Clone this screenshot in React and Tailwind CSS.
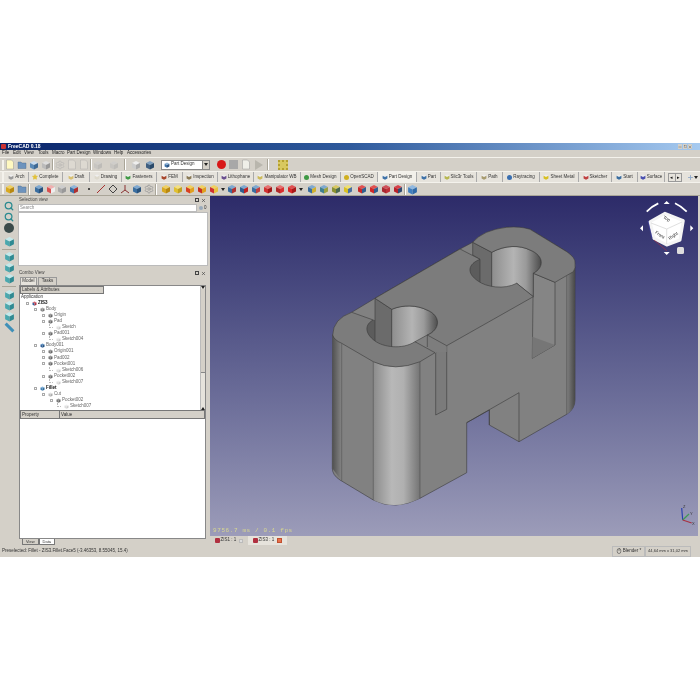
import React from "react";
import { Search, Settings, Plus, X, Minus, Square, Mouse, Star } from "lucide-react";

const font = "font-['Liberation_Sans',Arial,sans-serif]";

const Cube = ({ a = "#c33", b = "#911", c = "#e66", size = 10 }) => (
  <svg width={size} height={size} viewBox="0 0 10 10" className="shrink-0">
    <polygon points="5,1 9,3 5,5 1,3" fill={c} />
    <polygon points="1,3 5,5 5,9.5 1,7.5" fill={a} />
    <polygon points="9,3 5,5 5,9.5 9,7.5" fill={b} />
  </svg>
);

const Doc = ({ fill = "#fff8c0" }) => (
  <svg width="10" height="11" viewBox="0 0 10 11" className="shrink-0">
    <path d="M1.5 1h5l2 2v7h-7z" fill={fill} stroke="#999" strokeWidth=".5" />
  </svg>
);

const Folder = () => (
  <svg width="10" height="10" viewBox="0 0 10 10" className="shrink-0">
    <path d="M1 2h3l1 1h4v5.5H1z" fill="#6d93bd" stroke="#46688c" strokeWidth=".4" />
  </svg>
);

const Dot = ({ color = "#c33", size = 6 }) => (
  <span className="rounded-[1px] shrink-0" style={{ width: size, height: size, background: color }} />
);

const Arrow = () => (
  <svg width="4" height="3" viewBox="0 0 4 3" className="shrink-0">
    <path d="M0 0h4L2 3z" fill="#222" />
  </svg>
);

const Grip = () => <div className="w-[2px] h-[10px] mx-px border-x border-[#f4f2ec] bg-[#a9a598] shrink-0" />;

const Sep = () => <div className="w-[2px] h-[11px] mx-px border-r border-white bg-[#a9a598] shrink-0" />;

const workbenches = [
  { label: "Arch", w: "w-[24px]", color: "#9a9a9a" },
  { label: "Complete", w: "w-[34px]", color: "#e2c23a", star: true },
  { label: "Draft", w: "w-[27px]", color: "#d8c070" },
  { label: "Drawing", w: "w-[32px]", color: "#ddd9cc" },
  { label: "Fasteners", w: "w-[35px]", color: "#3f9a45" },
  { label: "FEM", w: "w-[26px]", color: "#a8472c" },
  { label: "Inspection", w: "w-[35px]", color: "#8a7a55" },
  { label: "Lithophane", w: "w-[36px]", color: "#6a4f90" },
  { label: "Manipulator WB", w: "w-[47px]", color: "#cdbb5a" },
  { label: "Mesh Design", w: "w-[40px]", color: "#3f9a45", round: true },
  { label: "OpenSCAD", w: "w-[37px]", color: "#d0b020", round: true },
  { label: "Part Design", w: "w-[39px]", color: "#3e72a8", active: true },
  { label: "Part", w: "w-[24px]", color: "#3e72a8" },
  { label: "Slic3r Tools", w: "w-[36px]", color: "#b8b850" },
  { label: "Path", w: "w-[26px]", color: "#a89c70" },
  { label: "Raytracing", w: "w-[37px]", color: "#3a6fb0", round: true },
  { label: "Sheet Metal", w: "w-[39px]", color: "#d8c020" },
  { label: "Sketcher", w: "w-[33px]", color: "#c04040" },
  { label: "Start", w: "w-[26px]", color: "#3a6ea0" },
  { label: "Surface", w: "w-[27px]", color: "#4a50b0" },
];

const menus = [
  ["File", "w-[11px]"],
  ["Edit", "w-[11px]"],
  ["View", "w-[14px]"],
  ["Tools", "w-[14px]"],
  ["Macro", "w-[15px]"],
  ["Part Design", "w-[26px]"],
  ["Windows", "w-[21px]"],
  ["Help", "w-[13px]"],
  ["Accessories", "w-[30px]"],
];

const tree = [
  { t: "ZIS3", x: "pl-[12px]", bold: true, cube: ["#2e5f9a", "#b03040", "#d06070"] },
  { t: "Body", x: "pl-[20px]", cube: ["#888", "#777", "#aaa"] },
  { t: "Origin", x: "pl-[28px]", cube: ["#777", "#666", "#999"] },
  { t: "Pad", x: "pl-[28px]", cube: ["#777", "#666", "#999"] },
  { t: "Sketch", x: "pl-[36px]", leaf: true, cube: ["#ddd", "#ccc", "#eee"] },
  { t: "Pad001", x: "pl-[28px]", cube: ["#777", "#666", "#999"] },
  { t: "Sketch004", x: "pl-[36px]", leaf: true, cube: ["#ddd", "#ccc", "#eee"] },
  { t: "Body001", x: "pl-[20px]", cube: ["#2e5f9a", "#24507f", "#5f8fc0"] },
  { t: "Origin001", x: "pl-[28px]", cube: ["#777", "#666", "#999"] },
  { t: "Pad002", x: "pl-[28px]", cube: ["#777", "#666", "#999"] },
  { t: "Pocket001", x: "pl-[28px]", cube: ["#777", "#666", "#999"] },
  { t: "Sketch006", x: "pl-[36px]", leaf: true, cube: ["#ddd", "#ccc", "#eee"] },
  { t: "Pocket002", x: "pl-[28px]", cube: ["#777", "#666", "#999"] },
  { t: "Sketch007", x: "pl-[36px]", leaf: true, cube: ["#ddd", "#ccc", "#eee"] },
  { t: "Fillet", x: "pl-[20px]", bold: true, cube: ["#3f7fb5", "#2e6a9a", "#7fb0d8"] },
  { t: "Cut", x: "pl-[28px]", cube: ["#bbb", "#aaa", "#ddd"] },
  { t: "Pocket002", x: "pl-[36px]", cube: ["#777", "#666", "#999"] },
  { t: "Sketch007", x: "pl-[44px]", leaf: true, cube: ["#ddd", "#ccc", "#eee"] },
];

const PanelTitle = ({ title }) => (
  <div className="flex items-center h-[6px] px-px text-[4.5px] text-[#444]">
    <span className="flex-1">{title}</span>
    <span className="w-[4px] h-[4px] border border-[#444] mr-[2px]" />
    <X size={5} strokeWidth={3} className="mr-px" />
  </div>
);

const Model = () => (
  <svg viewBox="210 196 488 340" className="w-full h-full block">
    <defs>
      <linearGradient id="lobe" gradientUnits="userSpaceOnUse" x1="373" x2="420" y1="0" y2="0">
        <stop offset="0" stopColor="#8a8a8a" />
        <stop offset=".4" stopColor="#b8b8b8" />
        <stop offset=".65" stopColor="#b0b0b0" />
        <stop offset="1" stopColor="#747474" />
      </linearGradient>
      <linearGradient id="edgeL" gradientUnits="userSpaceOnUse" x1="332" x2="342" y1="0" y2="0">
        <stop offset="0" stopColor="#4e4e4e" />
        <stop offset="1" stopColor="#868686" />
      </linearGradient>
      <linearGradient id="edgeR" gradientUnits="userSpaceOnUse" x1="566" x2="575" y1="0" y2="0">
        <stop offset="0" stopColor="#858585" />
        <stop offset="1" stopColor="#484848" />
      </linearGradient>
      <linearGradient id="hole1" gradientUnits="userSpaceOnUse" x1="391" x2="438" y1="0" y2="0">
        <stop offset="0" stopColor="#8c8c8c" />
        <stop offset=".45" stopColor="#b4b4b4" />
        <stop offset=".7" stopColor="#9a9a9a" />
        <stop offset="1" stopColor="#4c4c4c" />
      </linearGradient>
      <linearGradient id="hole2" gradientUnits="userSpaceOnUse" x1="491" x2="541" y1="0" y2="0">
        <stop offset="0" stopColor="#8c8c8c" />
        <stop offset=".45" stopColor="#b4b4b4" />
        <stop offset=".7" stopColor="#9a9a9a" />
        <stop offset="1" stopColor="#4c4c4c" />
      </linearGradient>
    </defs>

    <g stroke="#3a3a3a" strokeWidth=".6" strokeLinejoin="round">
      {/* body outline */}
      <path
        fill="#818181"
        d="M332.7 335L351.7 312.3L375 298.3L460 249L472.7 242.3L506.7 227.3L530 229.3L566.7 251.7Q575 257 575 270L575 400Q575 409 566.7 414.3L519 441.7L489.3 425L489.3 410L466.7 422.7L466.7 472.7L420 498.3Q395 511 373.3 500L340 480Q332.3 475 332.3 468.3Z"
      />

      {/* lobe sides */}
      <path stroke="none" fill="url(#edgeL)" d="M332.5 335L341.7 343.3L341.7 481L332.3 468.3Z" />
      <path stroke="none" fill="url(#lobe)" d="M373.3 361.7Q395 372 420 361.7L420 498.3Q395 511 373.3 500Z" />
      <path stroke="none" fill="url(#edgeR)" d="M566.7 251.7Q575 257 575 270L575 400Q575 409 566.7 414.3Z" />
      <path fill="none" strokeWidth=".4" d="M341.7 343.3V481M373.3 361.7V500M420 361.7V498.3M566.7 276V414.3" />

      {/* slots */}
      <path fill="#858585" d="M533.3 273.3L555 282.3L555 345L532.3 358.3Z" />
      <path fill="#767676" stroke="none" d="M532.3 336.7L555 345L532.3 358.3Z" />
      <path fill="#7b7b7b" d="M435.7 352.7L446.7 345.7L446.7 409.3L435.7 415Z" />
      <path fill="#7d7d7d" stroke="none" d="M427.3 335L446.7 345.7L446.7 352L435 352.7L427.3 348Z" />
      <path fill="none" d="M427.3 335V347" />

      {/* holes, the parts below the rim are hidden by the top faces */}
      <path fill="#5c5c5c" stroke="none" d="M373.3 320L375 320L375 348L360 348L360 322Z" />
      <path fill="#6b6b6b" d="M375 298.3L391.7 309.3L391.7 352L375 352Z" />
      <path fill="url(#hole1)" d="M391.7 309.3C403 304.5 417 305 427 310C442 316 440 330 427.3 335L415 341.7L415 352L391.7 352Z" />
      <path fill="#5c5c5c" stroke="none" d="M480 259.3L480 290L462 290L462 262Z" />
      <path fill="#6b6b6b" d="M472.7 242.3L491.7 252.3L491.7 292L480 292L480 259.3L472.7 255Z" />
      <path fill="url(#hole2)" d="M491.7 252.3C505 245 520 245 530 250C545 256 544 268 533.3 273.3L533.3 296.7L516.7 283.3L516.7 292L491.7 292Z" />

      {/* top faces */}
      <path
        fill="#7c7c7c"
        d="M332.7 335Q333 319 351.7 312.3L373.3 320C365 324 364 333 375 341C383 347 402 350 415 341.7L435 352.7L420 361.7Q395 372 373.3 361.7L341.7 343.3Q334 340 332.7 335Z"
      />
      <path
        fill="#7c7c7c"
        d="M375 298.3L460 249L480 259.3C468 264 466 273 478 281C486 287 504 290 516.7 283.3L533.3 296.7L446.7 345.7L427.3 335C440 330 442 316 427 310C417 305 403 304.5 391.7 309.3Z"
      />
      <path
        fill="#7c7c7c"
        d="M472.7 242.3Q483 230 506.7 227.3Q520 226 530 229.3L566.7 251.7Q576 258 575 263.3Q576 268 573.3 271.7L555 282.3L533.3 273.3C544 268 545 256 530 250C520 245 505 245 491.7 252.3Z"
      />

      {/* notch */}
      <path fill="none" d="M466.7 422.7L519 392.7V441.7M489.3 410V425" />
    </g>

    {/* navigation cube */}
    <g fill="#fff">
      <path d="M666.7 201l-3 3h6zM640 228.3l3-3v6zM693.3 228.3l-3-3v6zM666.7 255l-3-3h6z" />
      <path d="M646.7 211.7Q652 206 658.3 203.3M675 203.3Q681 206 686.7 211.7" fill="none" stroke="#fff" strokeWidth="1.8" />
      <path d="M665 213.3L683.3 220.7L680 240L666.7 245L654 238.3L650 221.7Z" stroke="#f4f4f4" strokeLinejoin="round" strokeWidth="3" />
      <path d="M651 223L666.7 229L682 222M666.7 229L666.7 244" fill="none" stroke="#d8d8d8" strokeWidth=".8" />
      <path d="M648 221L652 238" fill="none" stroke="#4040b0" strokeWidth=".5" />
      <path d="M654 240L667 251" fill="none" stroke="#b03040" strokeWidth=".6" />
      <rect x="677" y="247" width="7" height="7" rx="1.5" fill="#ddd" />
      <text x="666" y="220" fontSize="4.5" fill="#333" fontFamily="Liberation Sans" transform="rotate(30 666 220)" textAnchor="middle">Top</text>
      <text x="659" y="236" fontSize="4.5" fill="#333" fontFamily="Liberation Sans" transform="rotate(35 659 236)" textAnchor="middle">Front</text>
      <text x="674" y="237" fontSize="4.5" fill="#333" fontFamily="Liberation Sans" transform="rotate(-35 674 237)" textAnchor="middle">Right</text>
    </g>

    {/* axis triad */}
    <g strokeWidth="1.2" fill="none">
      <path d="M682.7 520L681.7 508" stroke="#2a3fb0" />
      <path d="M682.7 520L689 514" stroke="#3f9a55" />
      <path d="M682.7 520L691.7 523" stroke="#a83040" />
    </g>
    <g fontSize="4" fill="#333" fontFamily="Liberation Sans">
      <text x="683" y="508">Z</text>
      <text x="690" y="515">Y</text>
      <text x="692" y="525">X</text>
    </g>
  </svg>
);

const teal = { a: "#4aa8ae", b: "#2f8a92", c: "#c4e8ea", size: 11 };

export default function App() {
  return (
    <div className={`w-[700px] h-[700px] bg-white pt-[143px] overflow-hidden ${font}`}>
      <div className="h-[414px] flex flex-col bg-[#d4d0c8] text-[#333] blur-[0.3px]">
        {/* title bar */}
        <div className="h-[7px] flex items-center px-px bg-linear-to-r from-[#0a246a] via-[#2f5a9c] to-[#a6caf0] shrink-0">
          <Dot color="#c33" size={5} />
          <span className="ml-[2px] text-[5px] font-bold text-white">FreeCAD 0.18</span>
          <div className="ml-auto mr-[7px] flex gap-px">
            <span className="w-[4px] h-[5px] bg-[#d4d0c8] flex items-center justify-center"><Minus size={4} /></span>
            <span className="w-[4px] h-[5px] bg-[#d4d0c8] flex items-center justify-center"><Square size={3} /></span>
            <span className="w-[4px] h-[5px] bg-[#d4d0c8] flex items-center justify-center"><X size={4} /></span>
          </div>
        </div>

        {/* menu */}
        <div className="h-[7px] flex items-center pl-[2px] text-[4.5px] text-[#222] shrink-0">
          {menus.map(([m, w]) => (
            <span key={m} className={w}>{m}</span>
          ))}
        </div>

        {/* file toolbar */}
        <div className="h-[14px] flex items-center pl-px border-t border-[#f4f2ec] shrink-0">
          <Grip />
          <div className="flex items-center gap-[2px]">
            <Doc />
            <Folder />
            <Cube a="#5a8ab8" b="#3f6a95" c="#c8dcf0" />
            <Cube a="#bbb" b="#999" c="#ddd" />
          </div>
          <Sep />
          <div className="flex items-center gap-[2px] opacity-60">
            <Settings size={10} color="#aaa" />
            <Doc fill="#e4e0d8" />
            <Doc fill="#e4e0d8" />
          </div>
          <Sep />
          <div className="flex items-center gap-[6px] opacity-50">
            <Cube a="#bbb" b="#aaa" c="#ccc" size={10} />
            <Cube a="#bbb" b="#aaa" c="#ccc" size={10} />
          </div>
          <div className="ml-[4px]"><Sep /></div>
          <div className="ml-[4px] flex items-center gap-[4px]">
            <Cube a="#ccc" b="#aaa" c="#eee" />
            <Cube a="#3f5f80" b="#2a4a6a" c="#7fa0c0" />
          </div>
          <div className="ml-[6px] w-[49px] h-[10px] bg-white border border-[#888] flex items-center text-[4.5px] pl-[2px]">
            <Cube a="#3e72a8" b="#2b5585" c="#8fb5da" size={6} />
            <span className="ml-px flex-1">Part Design</span>
            <span className="w-[7px] h-full bg-[#d4d0c8] border-l border-[#888] flex items-center justify-center"><Arrow /></span>
          </div>
          <div className="ml-[7px] flex items-center gap-[3px]">
            <span className="w-[9px] h-[9px] rounded-full bg-[#d81818]" />
            <span className="w-[9px] h-[9px] bg-[#a8a8a8]" />
            <Doc fill="#efefe8" />
            <svg width="9" height="10" viewBox="0 0 9 10"><path d="M1 0l8 5-8 5z" fill="#b9b6ad" /></svg>
          </div>
          <div className="ml-[3px]"><Sep /></div>
          <div className="ml-[8px] w-[10px] h-[10px] border-2 border-dotted border-[#b5a030] bg-[#d8c860]" />
        </div>

        {/* workbench toolbar */}
        <div className="h-[12px] flex items-center pl-px border-y border-[#f4f2ec] bg-[#e6e3dc] shrink-0">
          <Grip />
          {workbenches.map((b) => (
            <div key={b.label} className={`${b.w} h-[10px] shrink-0 flex items-center justify-center gap-px border-r border-[#aaa] text-[4.5px] whitespace-nowrap ${b.active ? "bg-[#f2f0ea]" : ""}`}>
              {b.star ? (
                <Star size={6} fill={b.color} color={b.color} />
              ) : b.round ? (
                <span className="w-[5px] h-[5px] rounded-full shrink-0" style={{ background: b.color }} />
              ) : (
                <Cube a={b.color} b={b.color} c="#eee" size={6} />
              )}
              <span>{b.label}</span>
            </div>
          ))}
          <div className="ml-[3px] w-[14px] h-[9px] flex border border-[#999] text-[5px] leading-[7px] text-center text-[#111]">
            <span className="flex-1 border-r border-[#999]">◂</span>
            <span className="flex-1">▸</span>
          </div>
          <Plus size={7} strokeWidth={3} color="#8fa8c8" className="ml-[5px]" />
          <Arrow />
        </div>

        {/* part design toolbar */}
        <div className="h-[13px] flex items-center pl-px shrink-0 border-b border-[#a9a598]">
          <Grip />
          <div className="flex items-center gap-[2px]">
            <Cube a="#d8a820" b="#b88810" c="#f0d060" />
            <Folder />
          </div>
          <Sep />
          <div className="ml-[3px] flex items-center gap-[1.5px]">
            <Cube a="#3a6ea0" b="#28527c" c="#7ea8d0" />
            <Cube a="#d85050" b="#eee" c="#f0b0b0" />
            <Cube a="#aaa" b="#999" c="#ccc" />
            <Cube a="#3e72a8" b="#b03030" c="#8fb5da" />
          </div>
          <div className="ml-[9px] flex items-center gap-[2px]">
            <span className="w-[2px] h-[2px] rounded-full bg-[#222] mr-[4.5px]" />
            <svg width="10" height="10" viewBox="0 0 10 10"><path d="M1 9L9 1" stroke="#a83030" strokeWidth="1" /></svg>
            <svg width="10" height="10" viewBox="0 0 10 10"><path d="M5 1l4 4-4 4-4-4z" fill="none" stroke="#444" /></svg>
            <svg width="10" height="10" viewBox="0 0 10 10"><path d="M5 1v5L1 9M5 6l4 3" fill="none" stroke="#8a3030" /></svg>
            <Cube a="#3a6ea0" b="#28527c" c="#7ea8d0" />
            <Settings size={10} color="#999" />
          </div>
          <Sep />
          <div className="ml-[3px] flex items-center gap-[2px]">
            <Cube a="#d8a820" b="#b88810" c="#f0d060" />
            <Cube a="#e0c030" b="#c0a020" c="#f4e080" />
            <Cube a="#d84020" b="#e0a020" c="#f0d060" />
            <Cube a="#c83020" b="#e0a020" c="#f0d060" />
            <Cube a="#d03030" b="#e8c040" c="#f0d060" />
            <Arrow />
            <Cube a="#3a6ea0" b="#b03030" c="#7ea8d0" />
            <Cube a="#2f5f8f" b="#c02020" c="#7ea8d0" />
            <Cube a="#3a6ea0" b="#c04040" c="#7ea8d0" />
            <Cube a="#d03030" b="#a01818" c="#e87070" />
            <Cube a="#b02828" b="#d83030" c="#e87070" />
            <Cube a="#d82828" b="#a81818" c="#e05050" />
            <Arrow />
          </div>
          <div className="ml-[4px] flex items-center gap-[2px]">
            <Cube a="#3a6ea0" b="#d0b030" c="#7ea8d0" />
            <Cube a="#3f7f90" b="#9aa040" c="#7ea8d0" />
            <Cube a="#8a9030" b="#4a6a50" c="#d8c860" />
            <Cube a="#d8c020" b="#4a70a0" c="#f0e070" />
          </div>
          <div className="ml-[4px] flex items-center gap-[2px]">
            <Cube a="#c82828" b="#2f5f8f" c="#e05050" />
            <Cube a="#d02828" b="#30608f" c="#e05050" />
            <Cube a="#a82830" b="#c03038" c="#d05058" />
            <Cube a="#b82028" b="#304a70" c="#d84048" />
          </div>
          <Sep />
          <Cube a="#3f7fc0" b="#2f6aa8" c="#90b8e0" size={11} />
        </div>

        {/* main area */}
        <div className="flex-1 flex min-h-0">
          {/* view toolbar */}
          <div className="w-[18px] shrink-0 flex flex-col items-center pt-[5px] text-[#2a8a90]">
            <Search size={10} strokeWidth={3} className="mb-px" />
            <Search size={10} strokeWidth={3} className="mb-px" />
            <div className="w-[10px] h-[10px] rounded-full bg-[#3a4a4a] mb-[3px]" />
            <Cube {...teal} />
            <div className="w-[14px] h-px bg-[#a9a598] my-[1.5px]" />
            <Cube {...teal} />
            <Cube {...teal} />
            <Cube {...teal} />
            <div className="w-[14px] h-px bg-[#a9a598] my-[2px]" />
            <Cube {...teal} />
            <Cube {...teal} />
            <Cube {...teal} />
            <div className="w-[11px] h-[3px] bg-[#3f90b8] rotate-45 mt-[4px]" />
          </div>

          {/* docks */}
          <div className="w-[190px] shrink-0 flex flex-col pt-px">
            <PanelTitle title="Selection view" />
            <div className="flex items-center mt-px h-[8px]">
              <div className="w-[179px] h-full bg-white border border-[#bbb] text-[4.5px] leading-[6px] pl-px text-[#888]">Search</div>
              <span className="ml-[2px] w-[4px] h-[4px] rounded-full bg-[#9ab]" />
              <span className="ml-px text-[4.5px]">0</span>
            </div>
            <div className="h-[54px] bg-white border border-[#bbb] shrink-0" />
            <div className="mt-[4px]">
              <PanelTitle title="Combo View" />
            </div>
            <div className="flex mt-px pl-[2px] h-[8px] text-[4.5px] shrink-0">
              <span className="w-[17px] bg-[#e6e3dc] border border-b-0 border-[#999] text-center leading-[6px]">Model</span>
              <span className="w-[19px] ml-px border border-b-0 border-[#999] text-center leading-[6px]">Tasks</span>
            </div>

            <div className="flex-1 min-h-0 ml-px mr-[2px] border border-[#888] flex flex-col bg-white">
              <div className="flex h-[124px] shrink-0">
                <div className="flex-1 min-w-0 overflow-hidden">
                  <div className="w-[84px] h-[8px] bg-[#d4d0c8] border border-[#777] text-[4.5px] leading-[6px] pl-px">Labels &amp; Attributes</div>
                  <div className="text-[4.5px] leading-[6.1px] pl-px h-[6px]">Application</div>
                  {tree.map((r, i) => (
                    <div key={i} className={`flex items-center h-[6.1px] text-[4.5px] ${r.x}`}>
                      {r.leaf ? (
                        <span className="w-[4px] h-[4px] mr-[3px] -ml-[7px] -mt-[3px] border-l border-b border-dotted border-[#bbb]" />
                      ) : (
                        <span className="w-[3px] h-[3px] ml-[-6.5px] mr-[3.5px] border-[0.5px] border-[#aaa] bg-white" />
                      )}
                      <Cube a={r.cube[0]} b={r.cube[1]} c={r.cube[2]} size={5} />
                      <span className={`ml-px ${r.bold ? "font-bold text-[#111]" : "text-[#666]"}`}>{r.t}</span>
                    </div>
                  ))}
                </div>
                <div className="w-[5px] bg-[#e6e3dc] border-l border-[#bbb] flex flex-col items-center">
                  <Arrow />
                  <div className="w-full h-[84px] bg-[#d4d0c8] border-b border-[#888]" />
                  <div className="mt-auto rotate-180"><Arrow /></div>
                </div>
              </div>
              <div className="flex h-[9px] bg-[#d4d0c8] border border-[#777] text-[4.5px] leading-[7px] shrink-0">
                <span className="w-[39px] pl-px border-r border-[#777]">Property</span>
                <span className="pl-px">Value</span>
              </div>
              <div className="flex-1 bg-white" />
            </div>
            <div className="h-[6px] pl-[4px] flex text-[4px] leading-[5px] shrink-0 mb-[3px]">
              <span className="px-[3px] border border-t-0 border-[#777] rounded-b-[1px]">View</span>
              <span className="px-[3px] bg-white border border-t-0 border-[#777] rounded-b-[1px]">Data</span>
            </div>
          </div>

          <div className="w-[2px] shrink-0" />

          {/* 3D view */}
          <div className="flex-1 flex flex-col min-w-0">
            <div className="relative h-[340px] w-[488px] shrink-0 bg-linear-to-b from-[#2d2b69] to-[#9c9cb9]">
              <Model />
              <span className="absolute left-[3px] bottom-px font-['Liberation_Mono',monospace] text-[6px] text-[#d8d890] tracking-[0.6px]">9756.7 ms / 0.1 fps</span>
            </div>
            <div className="h-[9px] flex text-[4.5px] shrink-0">
              <div className="w-[38px] flex items-center justify-center gap-px">
                <Dot color="#b03040" size={5} />
                <span>ZIS1 : 1</span>
                <span className="ml-[2px] w-[4px] h-[4px] bg-[#ddd] border border-[#bbb]" />
              </div>
              <div className="w-[39px] flex items-center justify-center gap-px bg-[#e6e3dc]">
                <Dot color="#b03040" size={5} />
                <span>ZIS3 : 1</span>
                <span className="ml-[2px] w-[5px] h-[5px] bg-[#e8704a] border border-[#c05030]" />
              </div>
            </div>
          </div>
          <div className="w-[2px] shrink-0" />
        </div>

        {/* status bar */}
        <div className="h-[12px] -mt-[3px] flex items-center pl-[2px] text-[4.5px] text-[#333] shrink-0">
          <span>Preselected: Fillet - ZIS3.Fillet.Face5 (-3.46353, 8.55045, 15.4)</span>
          <div className="ml-auto flex items-center h-[11px] mr-[9px] whitespace-nowrap">
            <div className="w-[33px] h-full border border-[#bbb] flex items-center justify-center gap-px">
              <Mouse size={6} />
              <span>Blender *</span>
            </div>
            <div className="w-[46px] h-full border border-[#bbb] flex items-center justify-center text-[4px]">44,64 mm x 31,02 mm</div>
          </div>
        </div>
      </div>
    </div>
  );
}
